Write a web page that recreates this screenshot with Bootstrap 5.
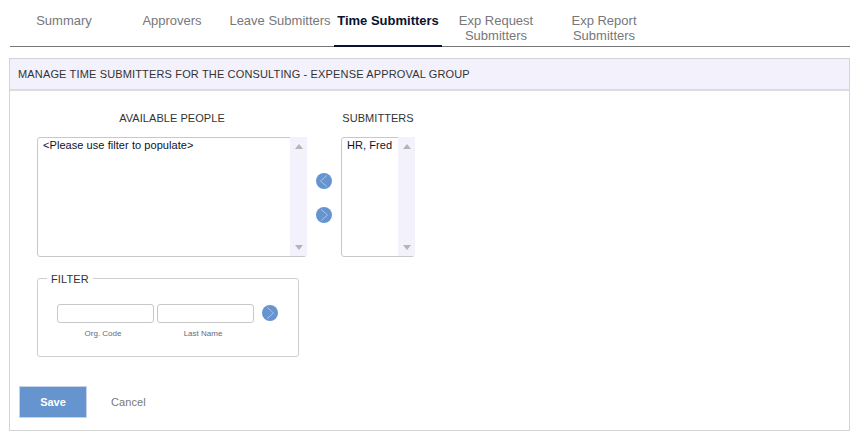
<!DOCTYPE html>
<html lang="en">
<head>
    <meta charset="UTF-8">
    <meta name="viewport" content="width=device-width, initial-scale=1">
    <title>Manage Time Submitters</title>
    <link href="https://cdn.jsdelivr.net/npm/bootstrap@5.3.0/dist/css/bootstrap.min.css" rel="stylesheet">
    <style>
        body {
            background: #fff;
            font-family: "Liberation Sans", Arial, sans-serif;
            color: #222;
            overflow: hidden;
        }
        .page-wrap { padding: 0 8px 0 9px; }
        .tab-strip {
            margin-left: 1px;
            height: 47px;
            border-bottom: 1px solid #77777a;
        }
        .tab-item {
            display: block;
            box-sizing: border-box;
            width: 108px;
            height: 47px;
            padding: 13px 0 0;
            font-size: 13px;
            line-height: 15px;
            color: #77777a;
            text-align: center;
            text-decoration: none;
        }
        .tab-item.on {
            font-weight: 700;
            color: #0b1230;
            border-bottom: 2px solid #0b1230;
        }
        .group-panel {
            margin-top: 11px;
            height: 373px;
            border: 1px solid #d4d4d4;
        }
        .panel-head {
            height: 32px;
            padding: 9px 8px 0;
            background: #f3f1fc;
            border-bottom: 2px solid #dcdcdc;
            font-size: 11px;
            line-height: 13px;
            letter-spacing: .15px;
            color: #333;
        }
        .panel-main { padding: 20px 0 0 27px; }
        .col-left { width: 270px; }
        .col-right { width: 74px; }
        .col-move { width: 34px; }
        .list-title {
            height: 26px;
            font-size: 11px;
            line-height: 14px;
            letter-spacing: .05px;
            text-align: center;
            color: #333;
        }
        .list-frame {
            height: 120px;
            border: 1px solid #c8c8c8;
            border-radius: 3px;
            background: #fff;
        }
        .list-text {
            padding: 1px 5px;
            font-size: 11px;
            line-height: 13px;
            letter-spacing: .06px;
            color: #0b1230;
            white-space: nowrap;
        }
        .fake-scroll {
            width: 17px;
            margin: -1px -1px 0 0;
            background: #f3f1fc;
            padding: 7px 0 6px;
        }
        .tri-up, .tri-down {
            width: 0;
            height: 0;
            border-left: 4px solid transparent;
            border-right: 4px solid transparent;
        }
        .tri-up { border-bottom: 5px solid #b4b4b4; }
        .tri-down { border-top: 5px solid #b4b4b4; }
        .round-btn {
            display: block;
            width: 16px;
            height: 16px;
            padding: 0;
            border: 0;
            background: none;
            line-height: 0;
        }
        .move-stack { margin-top: 25px; padding-top: 37px; gap: 18px; }
        .filter-box {
            width: 262px;
            height: 79px;
            margin: 21px 0 0 0;
            border: 1px solid #cfcfcf;
            border-radius: 3px;
            position: relative;
            padding: 25px 0 0 19px;
        }
        .filter-label {
            position: absolute;
            left: 9px;
            top: -6px;
            padding: 0 4px;
            background: #fff;
            font-size: 11px;
            line-height: 13px;
            letter-spacing: .1px;
            color: #333;
        }
        .field-wrap { width: 97px; margin-right: 3px; }
        .field-input {
            display: block;
            width: 97px;
            height: 19px;
            border: 1px solid #c8c8c8;
            border-radius: 3px;
            background: #fff;
        }
        .field-cap {
            margin-top: 6px;
            padding-right: 5px;
            font-size: 8px;
            line-height: 10px;
            text-align: center;
            color: #666a80;
        }
        .filter-go { margin: 1px 0 0 5px; }
        .action-row { margin: 29px 0 0 -18px; }
        .save-btn {
            width: 68px;
            height: 32px;
            padding: 0;
            border: 1px solid #c6d3e6;
            border-radius: 0;
            background: #6594cf;
            color: #fff;
            font-size: 11px;
            font-weight: 700;
        }
        .cancel-link {
            margin-left: 24px;
            font-size: 11px;
            letter-spacing: .1px;
            color: #77777a;
            text-decoration: none;
        }
    </style>
</head>
<body>

<div class="page-wrap">
    <div class="tab-strip d-flex">
        <a class="tab-item" href="#">Summary</a>
        <a class="tab-item" href="#">Approvers</a>
        <a class="tab-item" href="#">Leave Submitters</a>
        <a class="tab-item on" href="#">Time Submitters</a>
        <a class="tab-item" href="#">Exp Request<br>Submitters</a>
        <a class="tab-item" href="#">Exp Report<br>Submitters</a>
    </div>

    <div class="group-panel">
        <div class="panel-head">MANAGE TIME SUBMITTERS FOR THE CONSULTING - EXPENSE APPROVAL GROUP</div>
        <div class="panel-main">
            <div class="d-flex">
                <div class="col-left">
                    <div class="list-title">AVAILABLE PEOPLE</div>
                    <div class="list-frame d-flex">
                        <div class="list-text flex-grow-1">&lt;Please use filter to populate&gt;</div>
                        <div class="fake-scroll d-flex flex-column justify-content-between align-items-center">
                            <div class="tri-up"></div>
                            <div class="tri-down"></div>
                        </div>
                    </div>
                </div>
                <div class="col-move d-flex flex-column align-items-center">
                    <div class="d-flex flex-column move-stack">
                        <button class="round-btn" type="button" aria-label="Remove">
                            <svg width="16" height="16" viewBox="0 0 16 16"><circle cx="8" cy="8" r="8" fill="#6594cf"/><path d="M11 2.300 4.500 8l6.500 5.700" fill="none" stroke="#a9c2e6" stroke-width="1"/></svg>
                        </button>
                        <button class="round-btn" type="button" aria-label="Add">
                            <svg width="16" height="16" viewBox="0 0 16 16"><circle cx="8" cy="8" r="8" fill="#6594cf"/><path d="M5 2.300 11.500 8 5 13.700" fill="none" stroke="#a9c2e6" stroke-width="1"/></svg>
                        </button>
                    </div>
                </div>
                <div class="col-right">
                    <div class="list-title">SUBMITTERS</div>
                    <div class="list-frame d-flex">
                        <div class="list-text flex-grow-1">HR, Fred</div>
                        <div class="fake-scroll d-flex flex-column justify-content-between align-items-center">
                            <div class="tri-up"></div>
                            <div class="tri-down"></div>
                        </div>
                    </div>
                </div>
            </div>

            <div class="filter-box">
                <span class="filter-label">FILTER</span>
                <div class="d-flex align-items-start">
                    <div class="field-wrap">
                        <input class="field-input" type="text" aria-label="Org. Code">
                        <div class="field-cap">Org. Code</div>
                    </div>
                    <div class="field-wrap">
                        <input class="field-input" type="text" aria-label="Last Name">
                        <div class="field-cap">Last Name</div>
                    </div>
                    <button class="round-btn filter-go" type="button" aria-label="Search">
                        <svg width="16" height="16" viewBox="0 0 16 16"><circle cx="8" cy="8" r="8" fill="#6594cf"/><path d="M5 2.300 11.500 8 5 13.700" fill="none" stroke="#a9c2e6" stroke-width="1"/></svg>
                    </button>
                </div>
            </div>

            <div class="action-row d-flex align-items-center">
                <button class="save-btn" type="button">Save</button>
                <a class="cancel-link" href="#">Cancel</a>
            </div>
        </div>
    </div>
</div>

<script src="https://cdn.jsdelivr.net/npm/bootstrap@5.3.0/dist/js/bootstrap.bundle.min.js"></script>
</body>
</html>
